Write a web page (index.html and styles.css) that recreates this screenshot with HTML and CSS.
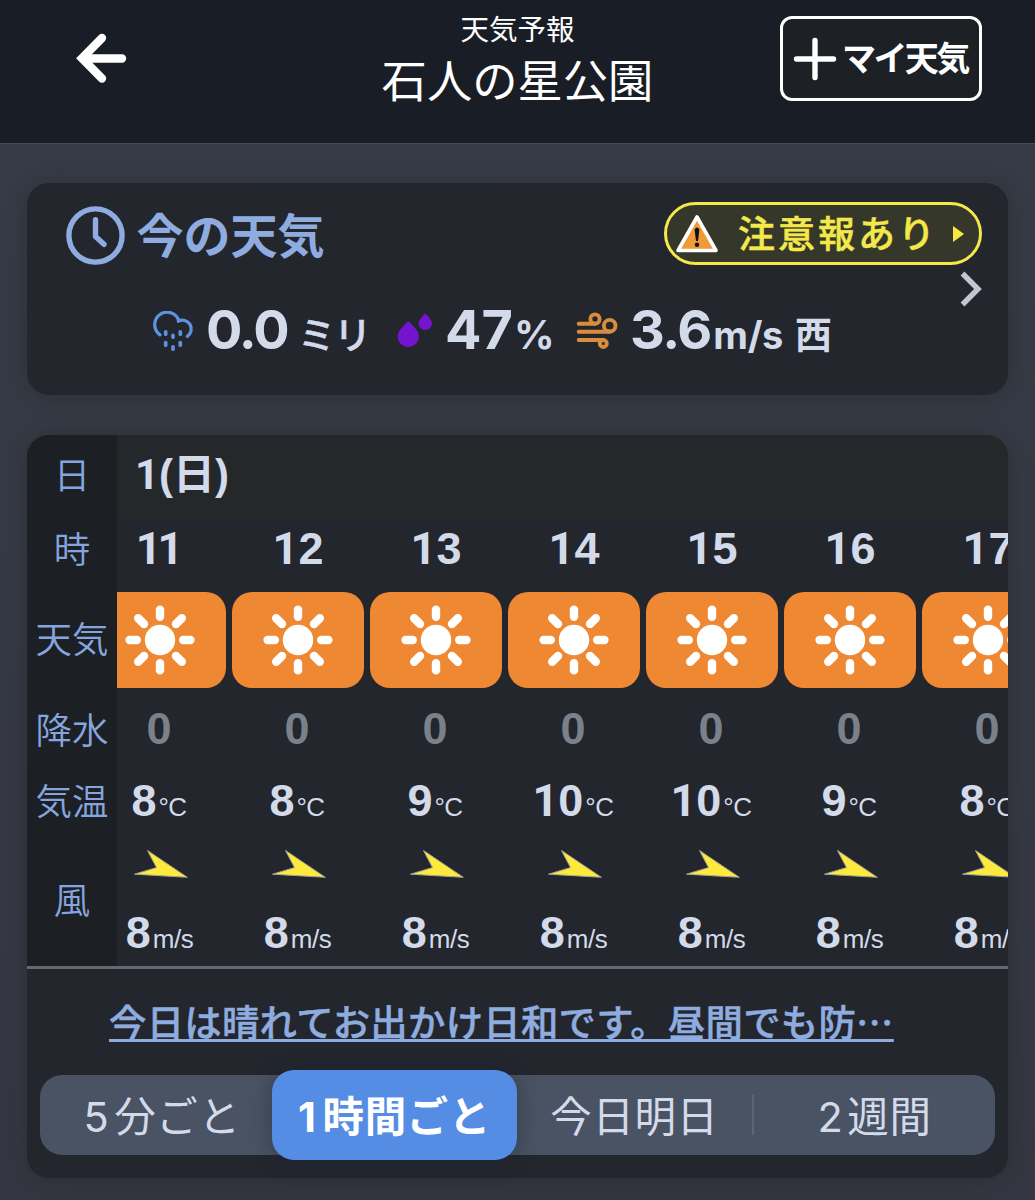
FILE: index.html
```html
<!DOCTYPE html>
<html lang="ja">
<head>
<meta charset="utf-8">
<title>天気予報 石人の星公園</title>
<link rel="stylesheet" href="styles.css">
</head>
<body>
<svg class="defs" width="0" height="0" aria-hidden="true">
  <symbol id="sun" viewBox="-35 -35 70 70">
    <circle r="15.2" fill="#fff"/>
    <g stroke="#fff" stroke-width="8.4" stroke-linecap="round">
      <path d="M0-30.4V-23.2M0 30.4V23.2M-30.4 0H-23.2M30.4 0H23.2M-21.8-21.8L-16-16M21.8-21.8L16-16M-21.8 21.8L-16 16M21.8 21.8L16 16"/>
    </g>
  </symbol>
  <symbol id="wind" viewBox="0 0 56 30">
    <path d="M14.5 1.5L54.3 28.3L1.5 25.2L23.5 18.6Z" fill="#fdea3c" stroke="#a5a295" stroke-width="1"/>
  </symbol>
</svg>

<header class="header">
  <a class="back">
    <svg width="52" height="52" viewBox="0 0 52 52" fill="none" stroke="#fff" stroke-width="8.4" stroke-linecap="round" stroke-linejoin="miter"><path d="M26 6L6 26.300L26 46.500"/><path d="M9 26.500H46"/></svg>
  </a>
  <div class="titles">
    <p class="subtitle">天気予報</p>
    <h1 class="title">石人の星公園</h1>
  </div>
  <button class="my-weather">
    <svg width="44" height="44" viewBox="0 0 44 44" stroke="#fff" stroke-width="5.4" stroke-linecap="round"><path d="M22 3.5V40.5M3.5 22H40.5"/></svg>
    <span>マイ天気</span>
  </button>
</header>

<main class="main">
  <section class="card now">
    <div class="now-head">
      <svg class="clock" width="60" height="60" viewBox="0 0 60 60" fill="none" stroke="#8eacdf" stroke-width="5.4" stroke-linecap="round" stroke-linejoin="round"><circle cx="29.500" cy="29.500" r="26.600"/><path d="M29.500 13.800V30.500L38 38.300"/></svg>
      <h2 class="now-title">今の天気</h2>
      <a class="alert">
        <svg width="44" height="40" viewBox="0 0 44 40"><path d="M22 3L41 36.500H3Z" fill="#f09a38" stroke="#fff" stroke-width="3.600" stroke-linejoin="round"/><path d="M19.600 15.500Q22 11.700 24.400 15.500L23 27H21Z" fill="#111"/><circle cx="22" cy="30.700" r="2.200" fill="#111"/></svg>
        <span class="alert-text">注意報あり</span>
        <svg class="alert-arrow" width="11" height="16" viewBox="0 0 11 16"><path d="M0 0L11 8L0 16Z" fill="#f6ea3f"/></svg>
      </a>
    </div>
    <div class="metrics">
      <div class="metric rain">
        <svg width="42" height="42" viewBox="0 0 42 42" fill="none" stroke="#5d92dd" stroke-width="3.300" stroke-linecap="round"><path d="M8 23.800A12.400 12.400 0 1 1 26.800 9.500"/><path d="M26.300 10.200A8.800 8.800 0 0 1 35.300 25.300"/><path stroke-width="3.700" d="M13.700 20.800V23.200M21 24.300V26.200M28.300 20.800V23.200M13.700 31.500V34.200M21 35.800V38.200M28.300 31.500V34.200"/></svg>
        <span class="value">0.0</span><span class="unit kana">ミリ</span>
      </div>
      <div class="metric humidity">
        <svg width="36" height="36" viewBox="0 0 36 36" fill="#7414cf"><path d="M11.300 9C15 13 22 18.500 22 24.300A10.700 10.700 0 0 1 .6 24.300C.6 18.500 7.500 13 11.300 9Z"/><path d="M28.200 1C30 4 35 7.500 35 11.300A6.700 6.700 0 0 1 21.600 11.300C21.600 7.500 26.500 4 28.200 1Z"/></svg>
        <span class="value">47</span><span class="unit percent">%</span>
      </div>
      <div class="metric gust">
        <svg width="42" height="38" viewBox="0 0 42 38" fill="none" stroke="#d98d3c" stroke-width="3.900" stroke-linecap="round"><path d="M2.700 11.700H19M2.700 19.700H33.700M2.700 28H27.300"/><circle cx="19" cy="7" r="4.600"/><circle cx="33.700" cy="13.700" r="5.800"/><circle cx="27.300" cy="31.500" r="3.500"/></svg>
        <span class="value">3.6</span><span class="unit speed-unit">m/s</span><span class="unit kanji">西</span>
      </div>
    </div>
    <svg class="chevron" width="22" height="36" viewBox="0 0 22 36" fill="none" stroke="#c3c6cf" stroke-width="5.400"><path d="M2.500 2.500L18 18L2.500 33.500"/></svg>
  </section>

  <section class="card forecast">
    <div class="table">
      <div class="labels">
        <span class="r-day">日</span>
        <span class="r-hour">時</span>
        <span class="r-sky">天気</span>
        <span class="r-rain">降水</span>
        <span class="r-temp">気温</span>
        <span class="r-wind">風</span>
      </div>
      <div class="scroll">
        <div class="r-day date"><span class="one">1</span>(日)</div>
        <div class="hours">
          <div class="hour"><div class="r-hour eleven"><span class="one">1</span><span class="one">1</span></div><div class="tile"><svg width="70" height="70"><use href="#sun"/></svg></div><div class="r-rain zero">0</div><div class="r-temp">8<small>°C</small></div><div class="arrow"><svg width="56" height="30"><use href="#wind"/></svg></div><div class="speed">8<small>m/s</small></div></div>
          <div class="hour"><div class="r-hour"><span class="one">1</span>2</div><div class="tile"><svg width="70" height="70"><use href="#sun"/></svg></div><div class="r-rain zero">0</div><div class="r-temp">8<small>°C</small></div><div class="arrow"><svg width="56" height="30"><use href="#wind"/></svg></div><div class="speed">8<small>m/s</small></div></div>
          <div class="hour"><div class="r-hour"><span class="one">1</span>3</div><div class="tile"><svg width="70" height="70"><use href="#sun"/></svg></div><div class="r-rain zero">0</div><div class="r-temp">9<small>°C</small></div><div class="arrow"><svg width="56" height="30"><use href="#wind"/></svg></div><div class="speed">8<small>m/s</small></div></div>
          <div class="hour"><div class="r-hour"><span class="one">1</span>4</div><div class="tile"><svg width="70" height="70"><use href="#sun"/></svg></div><div class="r-rain zero">0</div><div class="r-temp"><span class="one">1</span>0<small>°C</small></div><div class="arrow"><svg width="56" height="30"><use href="#wind"/></svg></div><div class="speed">8<small>m/s</small></div></div>
          <div class="hour"><div class="r-hour"><span class="one">1</span>5</div><div class="tile"><svg width="70" height="70"><use href="#sun"/></svg></div><div class="r-rain zero">0</div><div class="r-temp"><span class="one">1</span>0<small>°C</small></div><div class="arrow"><svg width="56" height="30"><use href="#wind"/></svg></div><div class="speed">8<small>m/s</small></div></div>
          <div class="hour"><div class="r-hour"><span class="one">1</span>6</div><div class="tile"><svg width="70" height="70"><use href="#sun"/></svg></div><div class="r-rain zero">0</div><div class="r-temp">9<small>°C</small></div><div class="arrow"><svg width="56" height="30"><use href="#wind"/></svg></div><div class="speed">8<small>m/s</small></div></div>
          <div class="hour"><div class="r-hour"><span class="one">1</span>7</div><div class="tile"><svg width="70" height="70"><use href="#sun"/></svg></div><div class="r-rain zero">0</div><div class="r-temp">8<small>°C</small></div><div class="arrow"><svg width="56" height="30"><use href="#wind"/></svg></div><div class="speed">8<small>m/s</small></div></div>
        </div>
      </div>
    </div>
    <a class="comment">今日は晴れてお出かけ日和です。昼間でも防…</a>
    <nav class="tabs">
      <a class="tab five">5<span>分ごと</span></a>
      <a class="tab active">1<span>時間ごと</span></a>
      <a class="tab days">今日明日</a>
      <a class="tab weeks">2<span>週間</span></a>
    </nav>
  </section>
</main>
</body>
</html>
```
FILE: styles.css
```css
* { box-sizing: border-box; }

body {
  margin: 0;
  width: 1035px;
  height: 1200px;
  overflow: hidden;
  background: #363943;
  color: #d3daea;
  font-family: "Noto Sans CJK JP", sans-serif;
}

h1, h2, p { margin: 0; font-weight: 400; }
svg { display: block; flex: none; }
.defs { position: absolute; }

.header {
  display: grid;
  grid-template-columns: 1fr 300px 1fr;
  align-items: start;
  height: 143px;
  background: #191d25;
  color: #fff;
}

.back { padding: 32px 0 0 76px; }

.titles { padding-top: 12px; text-align: center; white-space: nowrap; }
.subtitle { height: 32px; font-size: 28.5px; line-height: 32px; }
.title { margin-top: 9px; height: 50px; font-size: 45.300px; line-height: 50px; }

.my-weather {
  display: flex;
  align-items: center;
  justify-self: end;
  width: 202px;
  height: 85px;
  margin: 16px 53px 0 0;
  padding: 0 0 0 10px;
  border: 3px solid #fff;
  border-radius: 12px;
  background: #1d2126;
  color: #fff;
  font: 700 34px/40px "Noto Sans CJK JP", sans-serif;
  letter-spacing: -2.600px;
  white-space: nowrap;
}
.my-weather span { margin: -3px 0 0 5px; }

.main {
  display: flex;
  flex-direction: column;
  gap: 40px;
  height: 1057px;
  padding: 39px 27px 0;
  border-top: 1px solid #464a54;
  background: linear-gradient(#373b45, #343741);
}

.card {
  width: 981px;
  border-radius: 22px;
  background: #23262d;
  box-shadow: 0 2px 22px rgba(30, 32, 38, .4);
}

.now { position: relative; height: 212px; padding-top: 18px; }

.now-head { display: flex; align-items: center; height: 65px; padding: 0 26px 0 39px; }
.clock { margin-top: 5px; }
.now-title {
  margin: -1px auto 0 10.500px;
  color: #8eacdf;
  font-size: 47px;
  font-weight: 700;
  line-height: 56px;
}

.alert {
  display: flex;
  align-items: center;
  width: 318px;
  height: 63px;
  padding-left: 8px;
  border: 3px solid #f4e84a;
  border-radius: 32px;
  background: #35372b;
  color: #f4e84a;
}
.alert-text {
  margin: -4px 0 0 19px;
  font-size: 37px;
  font-weight: 500;
  line-height: 44px;
  letter-spacing: 3px;
  white-space: nowrap;
  -webkit-text-stroke: .5px currentColor;
}
.alert-arrow { margin-left: 15px; }

.metrics { display: flex; padding: 32px 0 0 125px; }
.metric {
  display: flex;
  align-items: baseline;
  height: 64px;
  font-family: Inter, "Noto Sans CJK JP", sans-serif;
  font-weight: 700;
  white-space: nowrap;
}
.metric svg { align-self: flex-start; }
.value { margin-left: 12px; font-size: 54px; line-height: 64px; letter-spacing: -2px; }
.unit { font-size: 38px; }
.rain { width: 245px; }
.humidity { width: 179px; }
.humidity .value { letter-spacing: 0; }
.rain svg { margin-top: 13px; }
.humidity svg { margin-top: 14px; }
.gust svg { margin-top: 14px; }
.kana { margin-left: 10px; font-weight: 500; letter-spacing: -2px; -webkit-text-stroke: .500px currentColor; }
.unit.percent { margin-left: 1px; font-size: 40px; }
.speed-unit { margin-left: 2.500px; letter-spacing: -.300px; }
.gust .value { letter-spacing: -1.500px; }
.kanji { margin-left: 12px; font-size: 37px; }

.chevron { position: absolute; left: 933px; top: 88px; }

.forecast { height: 743px; }

.table {
  display: flex;
  height: 534px;
  border-bottom: 3px solid #626872;
  border-radius: 22px 22px 0 0;
  overflow: hidden;
}

.labels {
  display: flex;
  flex-direction: column;
  width: 90px;
  background: #1c1f24;
  color: #86a5df;
  font-size: 36.500px;
  font-weight: 350;
  text-align: center;
  white-space: nowrap;
}
.labels span { display: flex; align-items: center; justify-content: center; padding-bottom: 6px; line-height: 50px; }

.r-day { height: 84px; }
.labels .r-hour { height: 64px; }
.labels .r-sky { height: 115px; }
.labels .r-rain { height: 67px; }
.labels .r-temp { height: 76px; }
.labels .r-wind { height: 122px; }

.scroll {
  flex: 1;
  min-width: 0;
  overflow: hidden;
  font-family: "Liberation Sans", "Noto Sans CJK JP", sans-serif;
  font-weight: 700;
}
.one { font-family: Roboto, sans-serif; line-height: 1; }
.date {
  padding-left: 18px;
  background: #25282a;
  font-size: 42px;
  line-height: 79px;
}

.hours { display: flex; margin-left: -26px; }
.hour {
  flex: none;
  width: 138px;
  font-size: 45px;
  text-align: center;
  white-space: nowrap;
}
.hour small { margin-left: 2px; font-size: 26px; font-weight: 400; letter-spacing: -.500px; }
.hour .r-hour { padding-top: 1px; height: 73px; line-height: 58px; }
.hour .eleven { letter-spacing: -4px; padding-right: 5px; }
.tile {
  display: flex;
  align-items: center;
  justify-content: center;
  width: 132px;
  height: 95.500px;
  margin: 0 3px;
  border-radius: 20px;
  background: #ef8833;
}
.hour .r-rain { height: 77px; padding-right: 2px; line-height: 81px; }
.zero { color: #7b818b; }
.hour .r-temp { height: 72px; padding-right: 2px; line-height: 72px; }
.arrow { display: flex; justify-content: center; padding: 12px 0 0 2px; height: 62px; }
.speed { padding-right: 1px; line-height: 67px; }

.comment {
  display: block;
  height: 106px;
  padding: 25px 0 0 82px;
  color: #8eacdf;
  font-size: 37.380px;
  font-weight: 500;
  line-height: 54px;
  letter-spacing: .280px;
  white-space: nowrap;
  text-decoration: underline;
  text-decoration-thickness: 2.500px;
  text-underline-offset: 2px;
  -webkit-text-stroke: .5px currentColor;
}

.tabs {
  display: flex;
  align-items: center;
  width: 955px;
  height: 80px;
  margin-left: 13px;
  border-radius: 22px;
  background: #4a5363;
  color: #d3daea;
  font: 400 41.500px/50px Inter, "Noto Sans CJK JP", sans-serif;
  letter-spacing: .600px;
  white-space: nowrap;
}
.tab { display: flex; align-items: baseline; justify-content: center; padding-top: 4px; }
.five { width: 232px; padding-left: 12px; gap: 5px; }
.active {
  width: 245px;
  height: 90px;
  padding-top: 22px;
  gap: 6px;
  border-radius: 22px;
  background: #558de5;
  box-shadow: 0 2px 22px rgba(25, 32, 50, .45);
  color: #fff;
  font-weight: 700;
}
.days { width: 237px; padding-right: 0; border-right: 2px solid #5d6472; line-height: 36px; }
.weeks { width: 241px; gap: 4px; }
```
